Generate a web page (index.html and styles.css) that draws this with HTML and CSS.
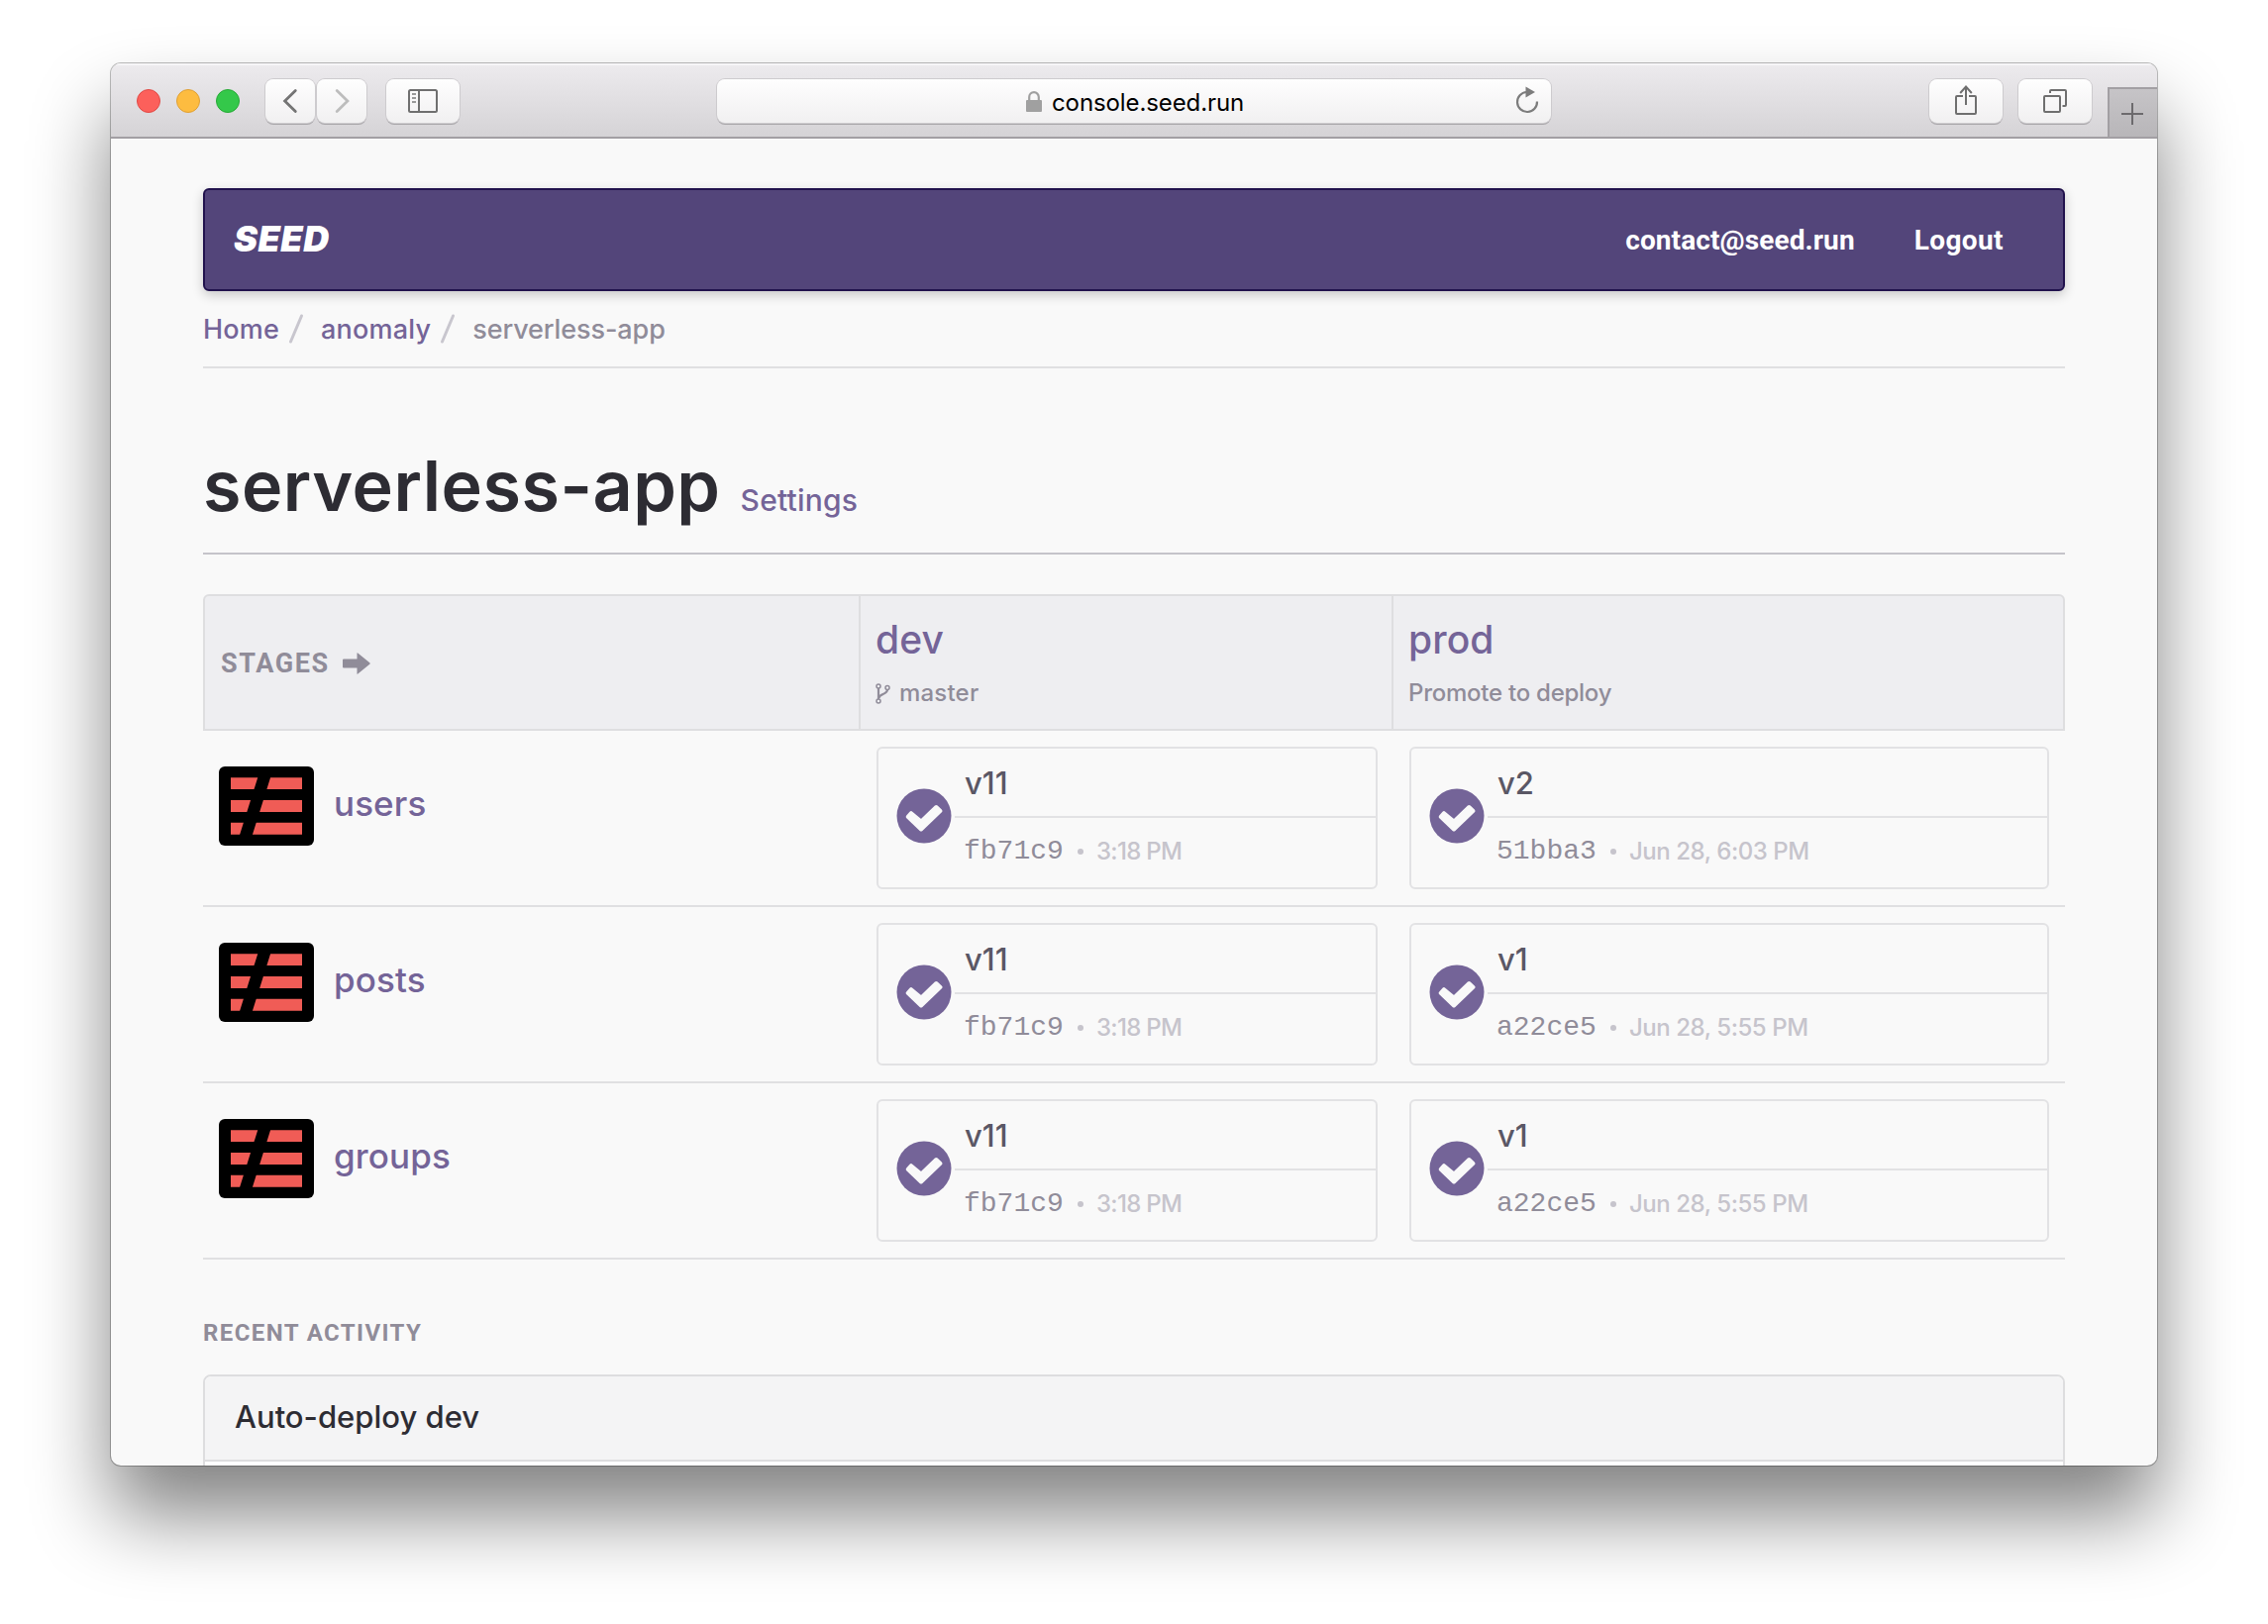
FILE: index.html
```html
<!DOCTYPE html>
<html lang="en">
<head>
<meta charset="utf-8">
<title>serverless-app</title>
<link rel="stylesheet" href="styles.css">
</head>
<body>
<svg class="sprite" width="0" height="0" aria-hidden="true">
  <symbol id="service" viewBox="0 0 96 80">
    <rect width="96" height="80" rx="6" fill="#000"/>
    <path d="M12 11.3h72v11.7H12zM12 34h72v12H12zM12 56.7h72v12H12z" fill="#f05c56"/>
    <path d="M40.6 7h12.8L32.6 73H19.8z" fill="#000"/>
  </symbol>
  <symbol id="check" viewBox="-28 -28 56 56">
    <circle r="27.5" fill="#746498"/>
    <path d="M-16.3.8-13-2.8-3 5.6 12.3-9l4.2 3.9L-3 13.5z" fill="#f9f9f9" stroke="#f9f9f9" stroke-width="4" stroke-linejoin="round"/>
  </symbol>
</svg>
<div class="window">
  <header class="titlebar">
    <div class="lights"><i class="light red"></i><i class="light amber"></i><i class="light green"></i></div>
    <div class="history">
      <span class="btn small"><svg width="50" height="44"><path d="M30.3 11.5 19.6 22l10.7 10.5" fill="none" stroke="#747474" stroke-width="2.8" stroke-linecap="round"/></svg></span>
      <span class="btn small"><svg width="50" height="44"><path d="M20.2 11.5 30.9 22 20.2 32.5" fill="none" stroke="#bdbdbd" stroke-width="2.8" stroke-linecap="round"/></svg></span>
    </div>
    <span class="btn"><svg width="74" height="44" fill="none" stroke="#6f6f6f" stroke-width="2"><rect x="23" y="11" width="28" height="22" rx="1.5"/><path d="M33 11v22"/><path d="M26 15h4M26 19h4M26 23h4" stroke="#999"/></svg></span>
    <div class="address">
      <svg class="lock" width="16" height="22"><path d="M3.2 10V6a4.8 4.8 0 0 1 9.6 0v4" fill="none" stroke="#a0a0a0" stroke-width="2.2"/><rect y="9" width="16" height="12" rx="1" fill="#a0a0a0"/></svg>
      <span class="url">console.seed.run</span>
      <svg class="reload" width="26" height="30"><path d="M23 15.500A10 10 0 1 1 12.500 6" fill="none" stroke="#7c7c7c" stroke-width="2.2"/><path d="M11.500.5 21 6l-9.500 5.500z" fill="#7c7c7c"/></svg>
    </div>
    <div class="tools">
      <span class="btn"><svg width="74" height="44" fill="none" stroke="#6f6f6f" stroke-width="2"><path d="M34 17h-6q-1 0-1 1v16q0 1 1 1h18q1 0 1-1V18q0-1-1-1h-6M37 26V8M31.200 14 37 7.600l5.800 6.400"/></svg></span>
      <span class="btn"><svg width="74" height="44" fill="none" stroke="#6f6f6f" stroke-width="2"><rect x="26" y="17" width="16" height="16" rx="1"/><path d="M32 14v-2q0-1 1-1h14q1 0 1 1v14q0 1-1 1h-2.500"/></svg></span>
    </div>
    <span class="newtab"><svg width="48" height="48"><path d="M23 14v22M12 25h22" stroke="#6c6a6d" stroke-width="2"/></svg></span>
  </header>

  <main class="page">
    <nav class="navbar">
      <a class="brand">SEED</a>
      <a class="navlink">contact@seed.run</a>
      <a class="navlink logout">Logout</a>
    </nav>
    <div class="crumbs">
      <a class="crumb">Home</a>
      <svg class="slash" width="16" height="30"><path d="M2.500 28 13.500 2" stroke="#c8c6ce" stroke-width="3" stroke-linecap="round"/></svg>
      <a class="crumb">anomaly</a>
      <svg class="slash" width="16" height="30"><path d="M2.500 28 13.500 2" stroke="#c8c6ce" stroke-width="3" stroke-linecap="round"/></svg>
      <span class="crumb current">serverless-app</span>
    </div>
    <div class="heading">
      <h1 class="title">serverless-app</h1>
      <a class="settings">Settings</a>
    </div>

    <section class="stages">
      <div class="row head">
        <div class="cell label"><span>STAGES</span><svg width="28" height="22"><path d="M0 7.500q0-1 1-1h13.500V.8q0-1 .8-.3L27.300 10.200q.8.8 0 1.600L15.300 21.500q-.8.7-.8-.3v-5.700H1q-1 0-1-1z" fill="#908c99"/></svg></div>
        <div class="cell">
          <a class="stage">dev</a>
          <div class="note"><svg class="branch" width="15" height="21" fill="none" stroke="#908c99"><path d="M3 5v11M12 6.500c0 5-8.500 4-8.500 8.500" stroke-width="2.200"/><circle cx="3" cy="3" r="2" stroke-width="1.500"/><circle cx="12" cy="4.500" r="2" stroke-width="1.500"/><circle cx="3" cy="18" r="2" stroke-width="1.500"/></svg><span class="master">master</span></div>
        </div>
        <div class="cell">
          <a class="stage">prod</a>
          <div class="note">Promote to deploy</div>
        </div>
      </div>

      <div class="row">
        <div class="service"><svg width="96" height="80"><use href="#service"/></svg><a class="name">users</a></div>
        <div class="slot"><div class="card"><svg class="check" width="56" height="56"><use href="#check"/></svg><div class="info"><div class="version">v11</div><div class="build"><code class="hash">fb71c9</code><i class="dot"></i><span class="time short">3:18 PM</span></div></div></div></div>
        <div class="slot last"><div class="card"><svg class="check" width="56" height="56"><use href="#check"/></svg><div class="info"><div class="version">v2</div><div class="build"><code class="hash">51bba3</code><i class="dot"></i><span class="time">Jun 28, 6:03 PM</span></div></div></div></div>
      </div>
      <div class="row">
        <div class="service"><svg width="96" height="80"><use href="#service"/></svg><a class="name">posts</a></div>
        <div class="slot"><div class="card"><svg class="check" width="56" height="56"><use href="#check"/></svg><div class="info"><div class="version">v11</div><div class="build"><code class="hash">fb71c9</code><i class="dot"></i><span class="time short">3:18 PM</span></div></div></div></div>
        <div class="slot last"><div class="card"><svg class="check" width="56" height="56"><use href="#check"/></svg><div class="info"><div class="version">v1</div><div class="build"><code class="hash">a22ce5</code><i class="dot"></i><span class="time">Jun 28, 5:55 PM</span></div></div></div></div>
      </div>
      <div class="row">
        <div class="service"><svg width="96" height="80"><use href="#service"/></svg><a class="name">groups</a></div>
        <div class="slot"><div class="card"><svg class="check" width="56" height="56"><use href="#check"/></svg><div class="info"><div class="version">v11</div><div class="build"><code class="hash">fb71c9</code><i class="dot"></i><span class="time short">3:18 PM</span></div></div></div></div>
        <div class="slot last"><div class="card"><svg class="check" width="56" height="56"><use href="#check"/></svg><div class="info"><div class="version">v1</div><div class="build"><code class="hash">a22ce5</code><i class="dot"></i><span class="time">Jun 28, 5:55 PM</span></div></div></div></div>
      </div>
    </section>

    <h2 class="subhead">RECENT ACTIVITY</h2>
    <section class="panel">
      <div class="panel-head">Auto-deploy dev</div>
      <div class="panel-body"></div>
    </section>
  </main>
</div>
</body>
</html>
```
FILE: styles.css
```css
* { box-sizing: border-box; }

body {
  margin: 0;
  height: 1640px;
  padding: 64px 112px 160px;
  overflow: hidden;
  background: #fff;
  font-family: Inter, sans-serif;
}

svg { display: block; flex: none; }
.sprite { display: none; }

.window {
  display: flex;
  flex-direction: column;
  height: 1416px;
  overflow: hidden;
  border-radius: 10px;
  background: #f9f9f9;
  box-shadow: 0 0 0 1px rgba(0, 0, 0, .26), 0 50px 80px rgba(0, 0, 0, .49);
}

/* Browser toolbar */
.titlebar {
  display: flex;
  align-items: flex-start;
  flex: none;
  height: 76px;
  padding: 16px 0 0 26px;
  border-bottom: 2px solid #a29fa3;
  background: linear-gradient(#edebee, #d5d3d6);
  box-shadow: inset 0 2px 0 #f6f5f7;
}
.lights { display: flex; gap: 16px; margin: 10px 26px 0 0; }
.light { width: 24px; height: 24px; border-radius: 50%; border: 1px solid; }
.red { background: #fc605b; border-color: #e04a46; }
.amber { background: #fdbc40; border-color: #dfa035; }
.green { background: #34c84a; border-color: #27aa36; }
.history { display: flex; gap: 2px; margin-right: 20px; }
.btn, .address {
  height: 44px;
  border-radius: 8px;
  background: linear-gradient(#fefefe, #f1f0f1);
  box-shadow: 0 0 0 1px #cdcbce, 0 2px 0 #aaa8ab;
}
.btn { width: 74px; }
.btn.small { width: 50px; }
.address {
  display: flex;
  align-items: center;
  width: 842px;
  margin-left: 260px;
  padding: 0 12px 0 312px;
}
.lock { margin-top: 1px; }
.url { flex: 1; margin: 3px 0 0 10px; font-size: 24px; line-height: 32px; letter-spacing: -.1px; color: #000; }
.reload { margin-right: -1px; }
.tools { display: flex; gap: 16px; margin: 0 16px 0 auto; }
.newtab {
  align-self: flex-end;
  width: 50px;
  height: 50px;
  border: solid #a29fa3;
  border-width: 2px 0 0 2px;
  background: linear-gradient(#c6c4c7, #b8b6b9);
}

/* Page */
.page { flex: none; width: 1880px; margin: 50px 0 0 93px; font-weight: 450; }
.navbar {
  display: flex;
  align-items: center;
  height: 104px;
  padding: 0 60px 0 29px;
  border: 2px solid #21124d;
  border-radius: 6px;
  background: #53457a;
  box-shadow: 0 4px 12px rgba(0, 0, 0, .2);
  color: #fff;
}
.brand { margin-right: auto; font-size: 36px; font-weight: 900; font-style: italic; line-height: 44px; letter-spacing: .5px; padding-bottom: 2px; }
.navlink { margin-left: 61px; padding-top: 2px; font: bold 28px/36px Roboto, sans-serif; letter-spacing: .1px; }
.logout { margin-left: 60px; letter-spacing: .4px; }

.crumbs {
  display: flex;
  align-items: center;
  height: 78px;
  border-bottom: 2px solid #e0e0e2;
  font-size: 27px;
  line-height: 36px;
}
.crumb { padding-top: 1px; color: #746498; letter-spacing: .2px; }
.crumb.current { color: #908c99; letter-spacing: -.1px; }
.slash { margin: 0 17px 0 9px; }

.heading {
  display: flex;
  align-items: baseline;
  height: 188px;
  padding-top: 79px;
  border-bottom: 2px solid #c5c4ca;
}
.title { margin: 0; font-size: 70px; font-weight: 600; line-height: 80px; letter-spacing: .5px; color: #2d2c33; }
.settings { margin-left: 20px; font-size: 30px; letter-spacing: .2px; color: #746498; }

.stages { margin-top: 40px; }
.row {
  display: grid;
  grid-template-columns: 662px 538px 680px;
  height: 178px;
  border-bottom: 2px solid #e0e0e2;
}
.row.head {
  height: 138px;
  border: 2px solid #dedee0;
  border-radius: 6px 6px 0 0;
  grid-template-columns: 660px 538px 678px;
  background: #eeeef1;
}
.cell { padding: 19px 14px 0 15px; border-left: 2px solid #dedee0; }
.cell.label {
  display: flex;
  align-items: center;
  gap: 13px;
  padding: 1px 16px 0;
  border: 0;
  font: bold 27px/32px Roboto, sans-serif;
  letter-spacing: 1.6px;
  color: #908c99;
}
.stage { display: block; font-size: 39px; line-height: 50px; letter-spacing: .1px; color: #746498; }
.note { display: flex; align-items: center; margin-top: 14px; font-size: 24px; line-height: 30px; letter-spacing: -.25px; color: #908c99; }
.branch { margin-right: 9px; }
.master { letter-spacing: .2px; }

.service { display: flex; align-items: center; gap: 20px; height: 80px; margin: 36px 16px 0; }
.name { font-size: 35px; line-height: 44px; letter-spacing: .1px; padding-bottom: 6px; color: #746498; }
.slot { padding: 16px 14px 16px 18px; }
.slot.last { padding-right: 16px; }
.card {
  display: flex;
  height: 144px;
  border: 2px solid #e2e2e4;
  border-radius: 6px;
}
.check { margin: 40px 3px 0 18px; }
.info { flex: 1; }
.version { height: 70px; padding: 0 10px; border-bottom: 2px solid #e2e2e4; font-size: 31px; line-height: 69px; color: #5a5765; }
.build { display: flex; align-items: center; height: 66px; padding-left: 9px; }
.hash { width: 102px; font: 28px/36px "Liberation Mono", monospace; color: #908c99; padding-top: 2px; }
.dot { width: 6px; height: 6px; margin: 2px 13px 0; border-radius: 50%; background: #c6c4cc; }
.time { font-size: 24px; letter-spacing: -.45px; color: #c6c4cc; }
.time.short { letter-spacing: -.7px; }

.subhead { margin: 59px 0 27px; font: bold 24px/30px Roboto, sans-serif; letter-spacing: 1.4px; color: #908c99; }
.panel { border: 2px solid #dddddf; border-radius: 8px 8px 0 0; overflow: hidden; background: #fff; }
.panel-head { height: 86px; padding-left: 30px; border-bottom: 2px solid #dddddf; background: #f4f4f5; font-size: 31px; line-height: 81px; letter-spacing: 0; color: #2d2c33; }
.panel-body { height: 60px; }
```
